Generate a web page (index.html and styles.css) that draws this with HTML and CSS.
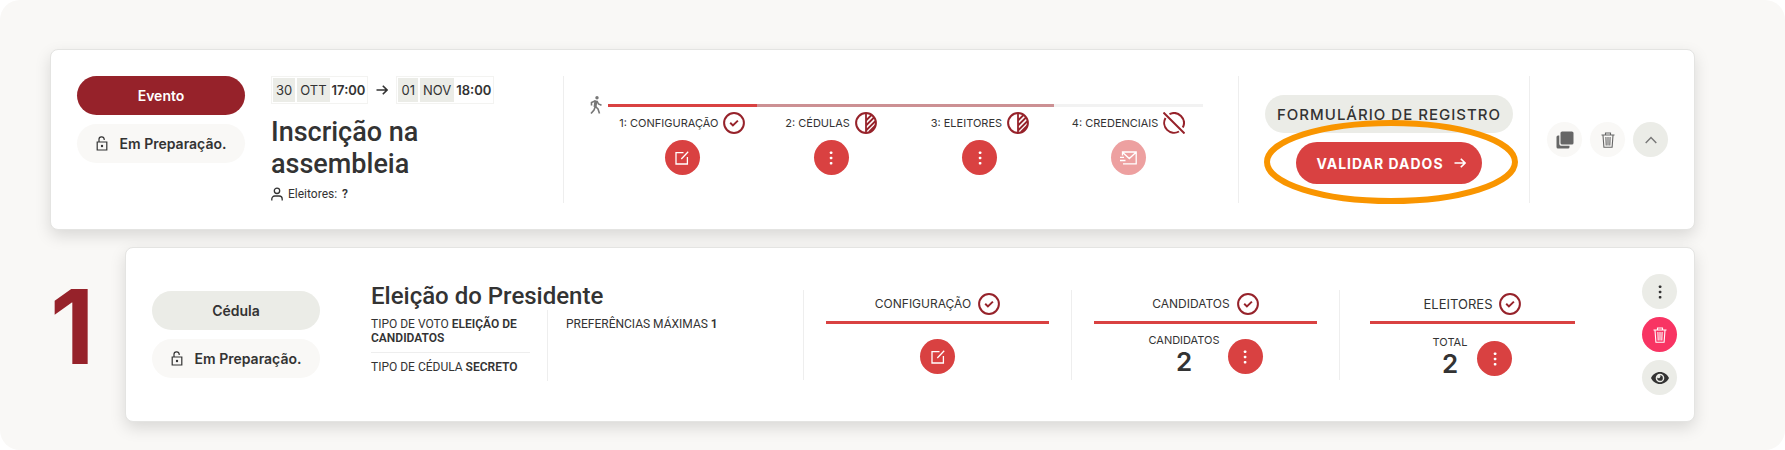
FILE: index.html
```
<!DOCTYPE html>
<html lang="pt">
<head>
    <meta charset="UTF-8">
    <meta name="viewport" content="width=device-width, initial-scale=1.0">
    <title>Eventos</title>
    <link rel="stylesheet" href="styles.css">
</head>
<body>
    <!-- Shared icons -->
    <svg class="sprite" aria-hidden="true">
        <symbol id="i-lock" viewBox="0 0 12 15">
            <path d="M3 6V3.6a2.6 2.6 0 0 1 5.2-.4V4M1.2 6h9.6v8H1.2z" fill="none" stroke="currentColor" stroke-width="1.2"/>
            <circle cx="6" cy="10" r="1.2" fill="currentColor"/>
        </symbol>
        <symbol id="i-arrow" viewBox="0 0 12 12">
            <path d="M.5 6h10.5M6.8 1.8L11 6l-4.2 4.2" fill="none" stroke="currentColor" stroke-width="1.6"/>
        </symbol>
        <symbol id="i-user" viewBox="0 0 12 14">
            <circle cx="6" cy="3.8" r="2.7" fill="none" stroke="currentColor" stroke-width="1.3"/>
            <path d="M.8 13.5V12a3 3 0 0 1 3-3h4.4a3 3 0 0 1 3 3v1.5" fill="none" stroke="currentColor" stroke-width="1.3"/>
        </symbol>
        <symbol id="i-walk" viewBox="0 0 12 18">
            <circle cx="7" cy="1.8" r="1.7" fill="currentColor"/>
            <path d="M6 4.5L5 11" fill="none" stroke="currentColor" stroke-width="3"/>
            <path d="M5.5 4.800L1.500 6.500V9.500M7 5l1.500 3 3 1.300M5.300 10.500L4 14l-3 3.500M5.500 10.500L8 13l1.500 4.500" fill="none" stroke="currentColor" stroke-width="1.6"/>
        </symbol>
        <symbol id="i-done" viewBox="0 0 22 22">
            <circle cx="11" cy="11" r="9.9" fill="none" stroke="currentColor" stroke-width="2"/>
            <path d="M7.2 10.8l2.7 2.6 5-4.8" fill="none" stroke="currentColor" stroke-width="2"/>
        </symbol>
        <symbol id="i-half" viewBox="0 0 22 22">
            <circle cx="11" cy="11" r="9.9" fill="none" stroke="currentColor" stroke-width="2"/>
            <path d="M11 1v20M11 8.5l5.5-5.5M11 13.5l8-8M11 18.5l9.500-9.500M14 20l6.500-6.500" fill="none" stroke="currentColor" stroke-width="1.8"/>
        </symbol>
        <symbol id="i-off" viewBox="0 0 22 22">
            <path d="M6.5 2.2A9.9 9.9 0 0 1 19.8 15.5M16 19.5A9.9 9.9 0 0 1 2.5 6M.5.5L21.5 21.5" fill="none" stroke="currentColor" stroke-width="2"/>
        </symbol>
        <symbol id="i-edit" viewBox="0 0 14 14">
            <path d="M8.5 1.6H1v11.4h11.4V6M6.300 8L13.200.8" fill="none" stroke="currentColor" stroke-width="1.3"/>
        </symbol>
        <symbol id="i-dots" viewBox="0 0 4 14">
            <rect x=".8" y=".5" width="2.6" height="2.6" rx=".8" fill="currentColor"/>
            <rect x=".8" y="5.7" width="2.6" height="2.6" rx=".8" fill="currentColor"/>
            <rect x=".8" y="10.9" width="2.6" height="2.6" rx=".8" fill="currentColor"/>
        </symbol>
        <symbol id="i-mail" viewBox="0 0 17 14">
            <path d="M2.5 4.5V1h13.7v11.8H3M2.5 1.2l6.8 6.3 6.800-6.300M0 6.300h4M0 9.500h5.500" fill="none" stroke="currentColor" stroke-width="1.3"/>
        </symbol>
        <symbol id="i-copy" viewBox="0 0 18 18">
            <rect x="4.5" y=".5" width="13" height="13" rx="1.6" fill="currentColor"/>
            <path d="M.5 6A1.5 1.5 0 0 1 2 4.5h1.300V13a1.700 1.700 0 0 0 1.700 1.700h8.500V16a1.500 1.500 0 0 1-1.500 1.500H2A1.500 1.500 0 0 1 .5 16z" fill="currentColor"/>
        </symbol>
        <symbol id="i-trash" viewBox="0 0 14 16">
            <path d="M.5 3h13M4.5 3V1h5v2M2 3.2l.9 12.1h8.200L12 3.200M4.900 5l.3 8.500M7 5v8.500M9.100 5l-.3 8.500" fill="none" stroke="currentColor" stroke-width="1.1"/>
        </symbol>
        <symbol id="i-up" viewBox="0 0 12 8">
            <path d="M.7 7L6 1.5 11.3 7" fill="none" stroke="currentColor" stroke-width="1.4"/>
        </symbol>
        <symbol id="i-eye" viewBox="0 0 18 12">
            <path fill-rule="evenodd" fill="currentColor" d="M9 0c4 0 7.3 2.5 9 6-1.7 3.5-5 6-9 6S1.7 9.5 0 6c1.700-3.500 5-6 9-6zm0 1.700a4.300 4.300 0 1 0 0 8.600 4.300 4.300 0 0 0 0-8.600z"/>
            <path fill="currentColor" d="M9 3.2A2.8 2.8 0 1 1 6.3 5.5 1.5 1.5 0 0 0 9 3.2z"/>
        </symbol>
    </svg>

    <main class="page">
        <section class="card event">
            <div class="tags">
                <button type="button" class="tag tag-main">Evento</button>
                <span class="tag tag-state"><svg class="lock"><use href="#i-lock"/></svg>Em Preparação.</span>
            </div>
            <div class="info">
                <div class="dates">
                    <span class="date"><span>30</span><span>OTT</span><b>17:00</b></span>
                    <svg class="arrow"><use href="#i-arrow"/></svg>
                    <span class="date"><span>01</span><span>NOV</span><b>18:00</b></span>
                </div>
                <h1>Inscrição na assembleia</h1>
                <p class="voters"><svg class="user"><use href="#i-user"/></svg>Eleitores: <b>?</b></p>
            </div>
            <div class="progress">
                <svg class="walk"><use href="#i-walk"/></svg>
                <ol class="steps">
                    <li class="step done">
                        <span class="step-label">1: CONFIGURAÇÃO <svg class="status"><use href="#i-done"/></svg></span>
                        <button type="button" class="round red" aria-label="Editar"><svg class="edit"><use href="#i-edit"/></svg></button>
                    </li>
                    <li class="step partial">
                        <span class="step-label">2: CÉDULAS <svg class="status"><use href="#i-half"/></svg></span>
                        <button type="button" class="round red" aria-label="Cédulas"><svg class="dots"><use href="#i-dots"/></svg></button>
                    </li>
                    <li class="step partial">
                        <span class="step-label">3: ELEITORES <svg class="status"><use href="#i-half"/></svg></span>
                        <button type="button" class="round red" aria-label="Eleitores"><svg class="dots"><use href="#i-dots"/></svg></button>
                    </li>
                    <li class="step">
                        <span class="step-label">4: CREDENCIAIS <svg class="status"><use href="#i-off"/></svg></span>
                        <button type="button" class="round red" aria-label="Enviar" disabled><svg class="mail"><use href="#i-mail"/></svg></button>
                    </li>
                </ol>
            </div>
            <div class="actions">
                <button type="button" class="pill">FORMULÁRIO DE REGISTRO</button>
                <div class="validate">
                    <button type="button" class="pill pill-red">VALIDAR DADOS <svg class="arrow"><use href="#i-arrow"/></svg></button>
                    <svg class="highlight" viewBox="0 0 254 84"><ellipse cx="127" cy="42" rx="124" ry="39"/></svg>
                </div>
            </div>
            <div class="tools">
                <button type="button" class="round pale" aria-label="Duplicar"><svg class="copy"><use href="#i-copy"/></svg></button>
                <button type="button" class="round pale" aria-label="Eliminar"><svg class="trash"><use href="#i-trash"/></svg></button>
                <button type="button" class="round grey faded" aria-label="Fechar"><svg class="up"><use href="#i-up"/></svg></button>
            </div>
        </section>

        <div class="row">
            <div class="number">1</div>
            <section class="card ballot">
                <div class="tags">
                    <button type="button" class="tag tag-ballot">Cédula</button>
                    <span class="tag tag-state"><svg class="lock"><use href="#i-lock"/></svg>Em Preparação.</span>
                </div>
                <div class="details">
                    <h2>Eleição do Presidente</h2>
                    <div class="props">
                        <div class="prop-col">
                            <p>TIPO DE VOTO <b>ELEIÇÃO DE CANDIDATOS</b></p>
                            <p>TIPO DE CÉDULA <b>SECRETO</b></p>
                        </div>
                        <div class="prop-col">
                            <p>PREFERÊNCIAS MÁXIMAS <b>1</b></p>
                        </div>
                    </div>
                </div>
                <div class="stage">
                    <div class="stage-head">CONFIGURAÇÃO <svg class="status"><use href="#i-done"/></svg></div>
                    <div class="stage-body">
                        <button type="button" class="round red" aria-label="Editar"><svg class="edit"><use href="#i-edit"/></svg></button>
                    </div>
                </div>
                <div class="stage">
                    <div class="stage-head">CANDIDATOS <svg class="status"><use href="#i-done"/></svg></div>
                    <div class="stage-body">
                        <div class="count">CANDIDATOS<b>2</b></div>
                        <button type="button" class="round red" aria-label="Candidatos"><svg class="dots"><use href="#i-dots"/></svg></button>
                    </div>
                </div>
                <div class="stage stage-last">
                    <div class="stage-head">ELEITORES <svg class="status"><use href="#i-done"/></svg></div>
                    <div class="stage-body">
                        <div class="count">TOTAL<b>2</b></div>
                        <button type="button" class="round red" aria-label="Eleitores"><svg class="dots"><use href="#i-dots"/></svg></button>
                    </div>
                </div>
                <div class="side">
                    <button type="button" class="round grey" aria-label="Mais"><svg class="dots"><use href="#i-dots"/></svg></button>
                    <button type="button" class="round pink" aria-label="Eliminar"><svg class="trash"><use href="#i-trash"/></svg></button>
                    <button type="button" class="round grey" aria-label="Ver"><svg class="eye"><use href="#i-eye"/></svg></button>
                </div>
            </section>
        </div>
    </main>
</body>
</html>
```
FILE: styles.css
```
* {
    box-sizing: border-box;
}
body {
    margin: 0;
    background: #fff;
    color: #333;
    font-family: Inter, "Liberation Sans", sans-serif;
    font-size: 12px;
}
h1, h2, p, ol {
    margin: 0;
    padding: 0;
}
h1, h2, .voters, .props {
    font-family: Roboto, "Liberation Sans", sans-serif;
}
svg {
    display: block;
    flex: none;
}
button {
    border: none;
    padding: 0;
    font-family: inherit;
    color: inherit;
    cursor: pointer;
}
.sprite {
    display: none;
}
.page {
    min-height: 100vh;
    padding: 49px 90px 28px 50px;
    background: #f9f8f6;
    border-radius: 20px;
}
.card {
    display: flex;
    background: #fff;
    border: 1px solid #e4e4e2;
    border-radius: 8px;
    box-shadow: 0 6px 16px rgba(0, 0, 0, 0.13);
}
.event {
    padding: 26px;
}

/* Left tags */
.tags {
    display: flex;
    flex-direction: column;
    gap: 9px;
    flex: none;
    width: 168px;
}
.tag {
    display: flex;
    align-items: center;
    justify-content: center;
    height: 39px;
    border-radius: 20px;
    font-size: 14px;
    font-weight: 600;
}
.tag-main {
    background: #96222a;
    color: #fff;
}
.tag-ballot {
    background: #ebece7;
}
.tag-state {
    gap: 12px;
    background: #f9f8f6;
}
.lock {
    width: 12px;
    height: 15px;
}

/* Event info */
.info {
    flex: 1;
    padding-left: 26px;
}
.dates {
    display: flex;
    align-items: center;
    gap: 8px;
}
.date {
    display: flex;
    gap: 2px;
    padding: 1px;
    border: 1px solid #f3f3f1;
    font-size: 13px;
    line-height: 24px;
}
.date span {
    padding: 0 3px;
    background: #ebece7;
}
.date b {
    padding-right: 1px;
    font-weight: 600;
}
.arrow {
    width: 12px;
    height: 12px;
}
h1 {
    width: 200px;
    margin-top: 12px;
    font-size: 27px;
    line-height: 32px;
    font-weight: 500;
}
.voters {
    display: flex;
    align-items: center;
    gap: 5px;
    margin-top: 6px;
    padding-bottom: 1px;
    line-height: 16px;
}
.voters b {
    font-weight: 600;
}
.user {
    width: 12px;
    height: 14px;
}

/* Event progress */
.progress {
    display: flex;
    width: 675px;
    padding: 20px 35px 0 26px;
    border-left: 1px solid #eee;
}
.walk {
    width: 12px;
    height: 18px;
    margin-right: 6px;
    color: #777;
}
.steps {
    display: flex;
    flex: 1;
    margin-top: 8px;
    list-style: none;
}
.step {
    display: flex;
    flex: 1;
    flex-direction: column;
    align-items: center;
    gap: 6px;
    border-top: 3px solid #f2f2f2;
    padding-top: 5px;
}
.done {
    border-color: #d94141;
}
.partial {
    border-color: #cc9093;
}
.step-label {
    display: flex;
    align-items: center;
    gap: 5px;
    white-space: nowrap;
    font-size: 11px;
}
.status {
    width: 22px;
    height: 22px;
    color: #96222a;
}

/* Round buttons */
.round {
    display: flex;
    align-items: center;
    justify-content: center;
    flex: none;
    width: 35px;
    height: 35px;
    border-radius: 50%;
}
.red {
    background: #d94141;
    color: #fff;
}
.red:disabled {
    background: #eda0a0;
}
.pale {
    background: #f9f8f6;
    color: #666;
}
.grey {
    background: #ebece7;
}
.faded {
    color: #777;
}
.pink {
    background: #f83463;
    color: #fff;
}
.edit {
    width: 14px;
    height: 14px;
}
.dots {
    width: 4px;
    height: 14px;
}
.mail {
    width: 17px;
    height: 14px;
}
.copy {
    width: 18px;
    height: 18px;
}
.trash {
    width: 14px;
    height: 16px;
}
.up {
    width: 12px;
    height: 8px;
}
.eye {
    width: 18px;
    height: 12px;
}

/* Event actions */
.actions {
    display: flex;
    flex-direction: column;
    align-items: center;
    justify-content: center;
    gap: 9px;
    width: 291px;
    border-left: 1px solid #eee;
    padding-left: 10px;
}
.pill {
    display: flex;
    align-items: center;
    gap: 10px;
    height: 38px;
    padding: 0 12px;
    border-radius: 20px;
    background: #ebece7;
    font-size: 15px;
    font-weight: 500;
    letter-spacing: 1px;
    white-space: nowrap;
}
.pill-red {
    height: 42px;
    padding: 0 16px 0 20px;
    border-radius: 21px;
    background: #d94141;
    color: #fff;
    font-size: 14px;
    font-weight: 700;
}
.validate {
    position: relative;
}
.highlight {
    position: absolute;
    top: -22px;
    left: -32px;
    width: 254px;
    height: 84px;
    pointer-events: none;
}
.highlight ellipse {
    fill: none;
    stroke: #f99500;
    stroke-width: 6;
}
.tools {
    display: flex;
    align-items: center;
    gap: 8px;
    padding-left: 17px;
    border-left: 1px solid #eee;
}

/* Ballot row */
.row {
    display: flex;
    align-items: center;
    margin-top: 17px;
}
.number {
    flex: none;
    width: 75px;
    padding-bottom: 15px;
    color: #96222a;
    font-size: 103px;
    font-weight: 700;
    line-height: 100px;
}
.ballot {
    flex: 1;
    align-items: center;
    height: 175px;
    padding: 0 17px 0 26px;
}
.ballot .tags {
    padding-bottom: 1px;
}
.details {
    flex: 1;
    padding: 0 0 6px 51px;
}
h2 {
    font-size: 24px;
    line-height: 28px;
    font-weight: 500;
}
.props {
    display: flex;
    line-height: 14px;
}
.prop-col {
    width: 176px;
    padding: 7px 17px 0 0;
}
.prop-col + .prop-col {
    width: auto;
    padding-left: 18px;
    border-left: 1px solid #eee;
}
.prop-col p {
    padding-bottom: 7px;
}
.prop-col p + p {
    padding-top: 7px;
    border-top: 1px solid #eee;
}
.prop-col b {
    font-weight: 600;
}
.stage {
    width: 268px;
    height: 90px;
    padding: 3px 22px 0;
    border-left: 1px solid #eee;
}
.stage-last {
    width: 268px;
    padding: 3px 32px 0 30px;
}
.stage-head {
    display: flex;
    align-items: center;
    justify-content: center;
    gap: 7px;
    padding-bottom: 6px;
    border-bottom: 3px solid #d94141;
}
.stage-last .stage-head {
    font-size: 13px;
}
.stage-body {
    display: flex;
    align-items: center;
    justify-content: center;
    gap: 8px;
    height: 58px;
    padding-top: 8px;
}
.stage-last .stage-body {
    gap: 10px;
    padding-top: 12px;
}
.count {
    display: flex;
    flex-direction: column;
    align-items: center;
    padding-bottom: 4px;
    font-size: 11px;
    line-height: 14px;
}
.count b {
    font-size: 26px;
    line-height: 30px;
    font-weight: 600;
}
.side {
    display: flex;
    flex-direction: column;
    gap: 8px;
    margin-left: 35px;
}
```
